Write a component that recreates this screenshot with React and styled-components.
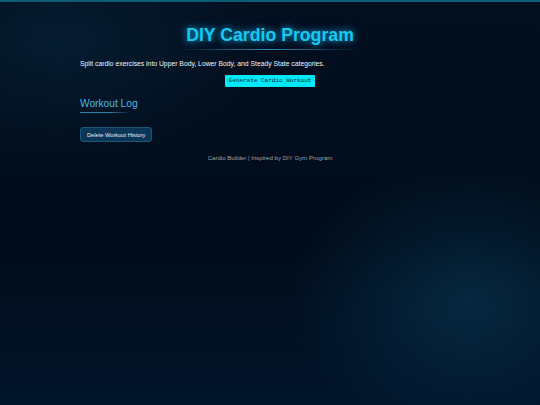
import React from 'react';
import styled, { createGlobalStyle } from 'styled-components';

const GlobalStyle = createGlobalStyle`
  html, body {
    margin: 0;
    padding: 0;
    height: 100%;
  }
  body {
    font-family: "Liberation Sans", Arial, sans-serif;
    background: #010d1c;
  }
  #root {
    min-height: 100%;
  }
`;

const Page = styled.div`
  min-height: 405px;
  box-sizing: border-box;
  border-top: 2px solid #0f5c78;
  background:
    radial-gradient(ellipse 260px 200px at 470px 300px, rgba(8, 60, 90, 0.55), transparent 70%),
    radial-gradient(ellipse 300px 180px at 60px 40px, rgba(10, 45, 70, 0.45), transparent 70%),
    linear-gradient(180deg, #020f1f 0%, #010c1a 60%, #01142a 100%);
`;

const Container = styled.div`
  width: 380px;
  margin: 0 auto;
  padding: 23px 0 0;
  display: flex;
  flex-direction: column;
`;

const Title = styled.h1`
  margin: 0;
  align-self: center;
  font-size: 17.7px;
  font-weight: 700;
  color: #18c8ee;
  text-shadow: 0 0 6px rgba(0, 200, 255, 0.7), 0 0 12px rgba(0, 180, 255, 0.35);
  padding-bottom: 4px;
  position: relative;
  &::after {
    content: '';
    position: absolute;
    left: -6px;
    right: -6px;
    bottom: 0;
    height: 1px;
    background: linear-gradient(90deg, transparent, #2a8fb0 50%, transparent);
  }
`;

const Description = styled.p`
  margin: 10px 0 0;
  font-size: 6.8px;
  color: #f0f4f8;
`;

const ActionRow = styled.div`
  display: flex;
  justify-content: center;
  margin-top: 8px;
`;

const GenerateButton = styled.button`
  font-family: "Liberation Mono", "DejaVu Sans Mono", monospace;
  font-size: 6px;
  color: #032a38;
  background: #00e8f8;
  border: none;
  border-radius: 1px;
  padding: 2px 4px;
  height: 12px;
  line-height: 8px;
`;

const SectionTitle = styled.h2`
  margin: 11px 0 0;
  align-self: flex-start;
  font-size: 10.2px;
  font-weight: 400;
  color: #4ab8e6;
  padding-bottom: 4px;
  position: relative;
  &::after {
    content: '';
    position: absolute;
    left: 0;
    bottom: 0;
    width: 50px;
    height: 1px;
    background: linear-gradient(90deg, #2f7fa6, #2f7fa6 60%, transparent);
  }
`;

const DeleteButton = styled.button`
  align-self: flex-start;
  margin-top: 14px;
  font-family: "Liberation Sans", Arial, sans-serif;
  font-size: 5.7px;
  color: #e6eef6;
  background: #0c3658;
  border: 1px solid #1b5578;
  border-radius: 3px;
  height: 15px;
  padding: 0 6px;
`;

const Footer = styled.footer`
  margin-top: 12px;
  text-align: center;
  font-size: 6.1px;
  color: #98a3b0;
`;

export default function App() {
  return (
    <>
      <GlobalStyle />
      <Page>
        <Container>
          <Title>DIY Cardio Program</Title>
          <Description>
            Split cardio exercises into Upper Body, Lower Body, and Steady State categories.
          </Description>
          <ActionRow>
            <GenerateButton>Generate Cardio Workout</GenerateButton>
          </ActionRow>
          <SectionTitle>Workout Log</SectionTitle>
          <DeleteButton>Delete Workout History</DeleteButton>
          <Footer>Cardio Builder | Inspired by DIY Gym Program</Footer>
        </Container>
      </Page>
    </>
  );
}
